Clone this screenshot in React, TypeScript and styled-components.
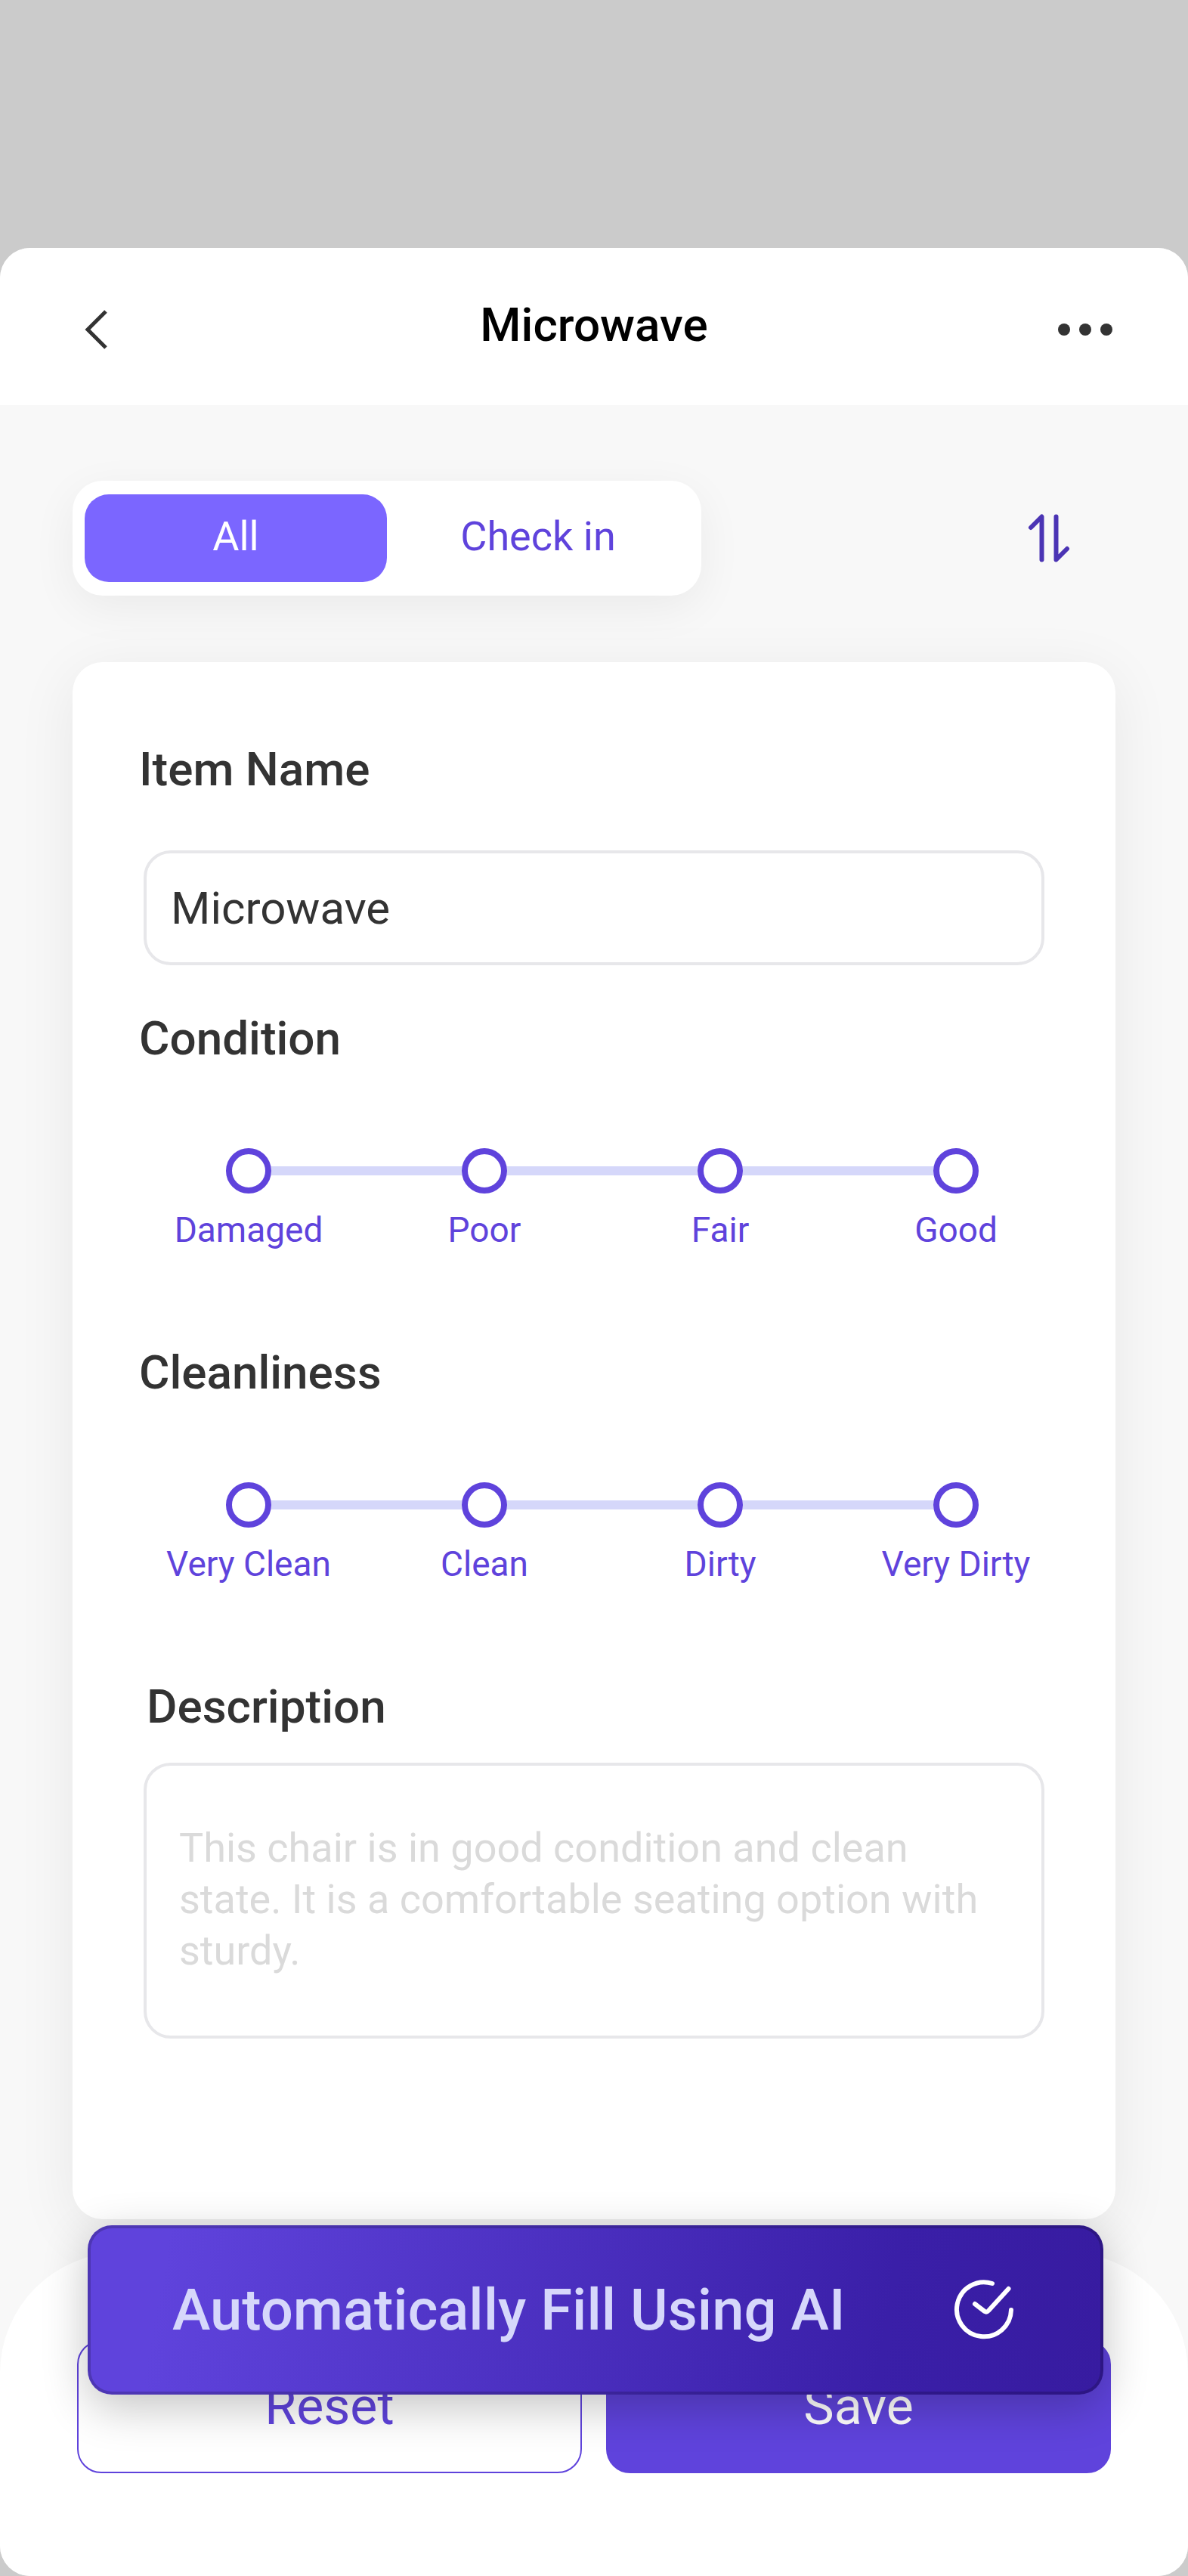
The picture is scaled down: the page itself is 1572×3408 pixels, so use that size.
import React, { useState } from "react";
import styled, { createGlobalStyle } from "styled-components";

const color = {
  backdrop: "#cbcbcb",
  surface: "#f8f8f8",
  ink: "#333333",
  brand: "#5f43dc",
  brandLight: "#7b66ff",
  track: "#d5d7fa",
  line: "#e7e7ea",
  hint: "#dadada",
};

const GlobalStyle = createGlobalStyle`
  *, *::before, *::after { box-sizing: border-box; }
  body {
    margin: 0;
    background: ${color.backdrop};
    font-family: Roboto, "Liberation Sans", sans-serif;
    color: ${color.ink};
  }
  button, input, textarea { font: inherit; color: inherit; margin: 0; }
  button { cursor: pointer; }
`;

const Page = styled.div`
  padding-top: 328px;
`;

const Sheet = styled.div`
  display: flex;
  flex-direction: column;
  overflow: hidden;
  border-radius: 40px;
  background: ${color.surface};
`;

const Header = styled.header`
  display: grid;
  grid-template-columns: 1fr auto 1fr;
  align-items: center;
  height: 208px;
  padding: 8px 96px 0;
  background: #fff;
`;

const Title = styled.h1`
  margin: 0;
  padding-bottom: 12px;
  font-size: 62px;
  line-height: 76px;
  font-weight: 500;
  color: #000;
`;

const IconButton = styled.button<{ $end?: boolean }>`
  display: flex;
  padding: 0;
  border: 0;
  background: none;
  justify-self: ${(p) => (p.$end ? "end" : "start")};
`;

const Main = styled.main`
  padding: 100px 96px 44px;
`;

const Toolbar = styled.div`
  display: flex;
  align-items: center;
  justify-content: space-between;
  padding-right: 56px;
  margin-bottom: 88px;
`;

const Tabs = styled.div`
  display: flex;
  flex: 0 1 832px;
  padding: 18px 16px;
  border-radius: 40px;
  background: #fff;
  box-shadow: 0 16px 60px rgba(0, 0, 0, 0.06);
`;

const Tab = styled.button<{ $active: boolean }>`
  flex: 1;
  height: 116px;
  padding: 0 0 4px;
  border: 0;
  border-radius: 32px;
  font-size: 54px;
  line-height: 68px;
  background: ${(p) => (p.$active ? color.brandLight : "transparent")};
  color: ${(p) => (p.$active ? "#fff" : color.brand)};
`;

const Card = styled.form`
  display: flex;
  flex-direction: column;
  padding: 104px 0 239px;
  border-radius: 40px;
  background: #fff;
  box-shadow: 0 16px 80px rgba(0, 0, 0, 0.07);
`;

const Field = styled.div<{ $gap: number; $top?: number }>`
  display: flex;
  flex-direction: column;
  gap: ${(p) => p.$gap}px;
  padding: ${(p) => p.$top ?? 0}px 94px 0;
`;

const labelText = `
  padding: 0;
  font-size: 62px;
  line-height: 76px;
  font-weight: 500;
`;

const FieldLabel = styled.label<{ $outdent?: boolean }>`
  ${labelText}
  margin-left: ${(p) => (p.$outdent ? "-6px" : "4px")};
`;

const TextInput = styled.input`
  width: 100%;
  height: 152px;
  padding: 0 32px;
  border: 4px solid ${color.line};
  border-radius: 36px;
  background: #fff;
  font-size: 60px;
  line-height: 76px;
`;

const TextBox = styled.textarea`
  display: block;
  width: 100%;
  height: 365px;
  padding: 75px 56px 75px 43px;
  border: 4px solid ${color.line};
  border-radius: 36px;
  background: #fff;
  font-size: 54px;
  line-height: 68px;
  resize: none;
  &::placeholder { color: ${color.hint}; opacity: 1; }
`;

const Scale = styled.fieldset`
  min-width: 0;
  margin: 0;
  padding: 59px 0 64px;
  border: 0;
`;

const ScaleName = styled.legend`
  ${labelText}
  float: left;
  width: 100%;
  padding-left: 88px;
  margin-bottom: 107px;
`;

const Steps = styled.div`
  clear: both;
  display: grid;
  grid-template-columns: repeat(4, 1fr);
  padding: 0 55px 0 77px;
`;

const Step = styled.label`
  display: flex;
  flex-direction: column;
  align-items: center;
  gap: 20px;
  font-size: 46px;
  line-height: 56px;
  white-space: nowrap;
  color: ${color.brand};
`;

const StepRail = styled.span`
  display: grid;
  grid-template-columns: 1fr 60px 1fr;
  align-items: center;
  width: 100%;
  &::before, &::after {
    content: "";
    height: 12px;
    background: ${color.track};
  }
  ${Step}:first-child &::before { background: transparent; }
  ${Step}:last-child &::after { background: transparent; }
`;

const StepDot = styled.input`
  appearance: none;
  width: 60px;
  height: 60px;
  border: 8px solid ${color.brand};
  border-radius: 50%;
  background: #fff;
  &:checked { background: ${color.brand}; }
`;

const Footer = styled.footer`
  position: relative;
  display: grid;
  grid-template-columns: 1fr 1fr;
  gap: 32px;
  padding: 116px 102px 136px;
  border-radius: 160px 160px 0 0;
  background: #fff;
`;

const Action = styled.button<{ $primary?: boolean }>`
  height: 176px;
  padding: 0;
  border: 2px solid ${color.brand};
  border-radius: 32px;
  font-size: 68px;
  line-height: 76px;
  background: ${(p) => (p.$primary ? color.brand : "#fff")};
  color: ${(p) => (p.$primary ? "#fff" : color.brand)};
`;

const AiButton = styled.button`
  position: absolute;
  top: -36px;
  left: 116px;
  right: 112px;
  display: flex;
  align-items: center;
  justify-content: space-between;
  height: 224px;
  padding: 0 114px 0 108px;
  border: 4px solid rgba(0, 0, 0, 0.18);
  border-radius: 32px;
  background: linear-gradient(100deg, #5f43dc 8%, #3a1fa8 78%, #371ba0) border-box;
  box-shadow: 0 16px 60px rgba(0, 0, 0, 0.24);
  font-size: 76px;
  line-height: 96px;
  font-weight: 500;
  color: #d6d7fb;
`;

const BackIcon = () => (
  <svg width="64" height="64" viewBox="0 0 64 64" fill="none" stroke="#333" strokeWidth="5">
    <path d="M44 8 20 32l24 24" />
  </svg>
);

const MoreIcon = () => (
  <svg width="76" height="64" viewBox="0 0 76 64" fill="#333">
    <circle cx="8" cy="32" r="8" />
    <circle cx="36" cy="32" r="8" />
    <circle cx="64" cy="32" r="8" />
  </svg>
);

const SortIcon = () => (
  <svg width="64" height="64" viewBox="0 0 64 64" fill="none" stroke="#4b34b4" strokeWidth="6" strokeLinecap="round" strokeLinejoin="round">
    <path d="M8 18 22.500 3.500v57M41.500 3.500v57L56 46" />
  </svg>
);

const CheckIcon = () => (
  <svg width="80" height="80" viewBox="0 0 80 80" fill="none" stroke="#fff" strokeWidth="6" strokeLinecap="round" strokeLinejoin="round">
    <path d="M51 5A36 36 0 1 0 76 40" />
    <path d="m28 32 13 10q2.500 1.500 5-1L72.500 12" />
  </svg>
);

const scales = [
  { name: "Condition", steps: ["Damaged", "Poor", "Fair", "Good"] },
  { name: "Cleanliness", steps: ["Very Clean", "Clean", "Dirty", "Very Dirty"] },
];

const tabs = ["All", "Check in"];

export default function App() {
  const [tab, setTab] = useState("All");
  const [name, setName] = useState("Microwave");

  return (
    <>
      <GlobalStyle />
      <Page>
        <Sheet>
          <Header>
            <IconButton type="button" aria-label="Back"><BackIcon /></IconButton>
            <Title>Microwave</Title>
            <IconButton type="button" aria-label="More options" $end><MoreIcon /></IconButton>
          </Header>
          <Main>
            <Toolbar>
              <Tabs>
                {tabs.map((t) => (
                  <Tab key={t} type="button" aria-pressed={t === tab} $active={t === tab} onClick={() => setTab(t)}>
                    {t}
                  </Tab>
                ))}
              </Tabs>
              <IconButton type="button" aria-label="Sort"><SortIcon /></IconButton>
            </Toolbar>
            <Card id="item-form" onSubmit={(e) => e.preventDefault()}>
              <Field $gap={69}>
                <FieldLabel htmlFor="item-name" $outdent>Item Name</FieldLabel>
                <TextInput id="item-name" value={name} onChange={(e) => setName(e.target.value)} />
              </Field>
              {scales.map((scale) => (
                <Scale key={scale.name}>
                  <ScaleName>{scale.name}</ScaleName>
                  <Steps>
                    {scale.steps.map((step) => (
                      <Step key={step}>
                        <StepRail>
                          <StepDot type="radio" name={scale.name} value={step} />
                        </StepRail>
                        {step}
                      </Step>
                    ))}
                  </Steps>
                </Scale>
              ))}
              <Field $gap={36} $top={59}>
                <FieldLabel htmlFor="description">Description</FieldLabel>
                <TextBox
                  id="description"
                  placeholder="This chair is in good condition and clean state. It is a comfortable seating option with sturdy."
                />
              </Field>
            </Card>
          </Main>
          <Footer>
            <Action type="reset" form="item-form">Reset</Action>
            <Action type="submit" form="item-form" $primary>Save</Action>
            <AiButton type="button">
              Automatically Fill Using AI
              <CheckIcon />
            </AiButton>
          </Footer>
        </Sheet>
      </Page>
    </>
  );
}
